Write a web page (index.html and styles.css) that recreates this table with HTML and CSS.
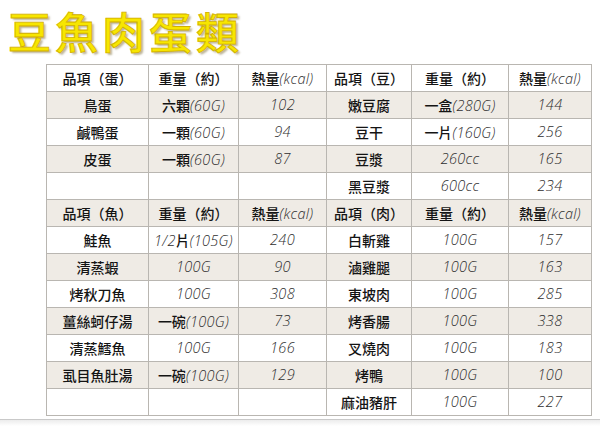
FILE: index.html
```html
<!DOCTYPE html>
<html lang="zh-Hant">
<head>
<meta charset="utf-8">
<title>豆魚肉蛋類</title>
<link rel="stylesheet" href="styles.css">
</head>
<body>
<div class="page">
  <h1 class="title">豆魚肉蛋類</h1>
  <table class="food">
    <colgroup>
      <col class="c1"><col class="c2"><col class="c3"><col class="c4"><col class="c5"><col class="c6">
    </colgroup>
    <tbody>
      <tr><td>品項（蛋）</td><td>重量（約）</td><td>熱量<span class="n">(kcal)</span></td><td>品項（豆）</td><td>重量（約）</td><td>熱量<span class="n">(kcal)</span></td></tr>
      <tr class="alt"><td>鳥蛋</td><td>六顆<span class="n">(60G)</span></td><td class="n">102</td><td>嫩豆腐</td><td>一盒<span class="n">(280G)</span></td><td class="n">144</td></tr>
      <tr><td>鹹鴨蛋</td><td>一顆<span class="n">(60G)</span></td><td class="n">94</td><td>豆干</td><td>一片<span class="n">(160G)</span></td><td class="n">256</td></tr>
      <tr class="alt"><td>皮蛋</td><td>一顆<span class="n">(60G)</span></td><td class="n">87</td><td>豆漿</td><td class="n">260cc</td><td class="n">165</td></tr>
      <tr><td></td><td></td><td></td><td>黑豆漿</td><td class="n">600cc</td><td class="n">234</td></tr>
      <tr class="alt"><td>品項（魚）</td><td>重量（約）</td><td>熱量<span class="n">(kcal)</span></td><td>品項（肉）</td><td>重量（約）</td><td>熱量<span class="n">(kcal)</span></td></tr>
      <tr><td>鮭魚</td><td><span class="n">1/2</span>片<span class="n">(105G)</span></td><td class="n">240</td><td>白斬雞</td><td class="n">100G</td><td class="n">157</td></tr>
      <tr class="alt"><td>清蒸蝦</td><td class="n">100G</td><td class="n">90</td><td>滷雞腿</td><td class="n">100G</td><td class="n">163</td></tr>
      <tr><td>烤秋刀魚</td><td class="n">100G</td><td class="n">308</td><td>東坡肉</td><td class="n">100G</td><td class="n">285</td></tr>
      <tr class="alt"><td>薑絲蚵仔湯</td><td>一碗<span class="n">(100G)</span></td><td class="n">73</td><td>烤香腸</td><td class="n">100G</td><td class="n">338</td></tr>
      <tr><td>清蒸鱈魚</td><td class="n">100G</td><td class="n">166</td><td>叉燒肉</td><td class="n">100G</td><td class="n">183</td></tr>
      <tr class="alt"><td>虱目魚肚湯</td><td>一碗<span class="n">(100G)</span></td><td class="n">129</td><td>烤鴨</td><td class="n">100G</td><td class="n">100</td></tr>
      <tr><td></td><td></td><td></td><td>麻油豬肝</td><td class="n">100G</td><td class="n">227</td></tr>
    </tbody>
  </table>
  <div class="edge"></div>
</div>
</body>
</html>
```
FILE: styles.css
```css
html, body {
  margin: 0;
  padding: 0;
  background: #ffffff;
}
.page {
  width: 600px;
  height: 426px;
  overflow: hidden;
  display: flex;
  flex-direction: column;
}
.title {
  margin: 0;
  padding: 0 0 0 8px;
  height: 60px;
  box-sizing: border-box;
  font-family: "Noto Sans CJK TC", "Noto Sans CJK SC", sans-serif;
  font-weight: 500;
  font-size: 43px;
  line-height: 60px;
  letter-spacing: 4px;
  color: #f7e600;
  -webkit-text-stroke: 0.8px #d2b000;
  text-shadow: 2px 2px 2px rgba(90, 70, 0, 0.4);
}
.food {
  margin: 4px 0 0 46px;
  border-collapse: collapse;
  table-layout: fixed;
  width: 545px;
  font-family: "Noto Sans CJK TC", "Noto Sans CJK SC", sans-serif;
  font-size: 14px;
  font-weight: 500;
  color: #141414;
}
.c1 { width: 102px; }
.c2 { width: 90px; }
.c3 { width: 88px; }
.c4 { width: 85px; }
.c5 { width: 97px; }
.c6 { width: 83px; }
.food td {
  height: 26px;
  padding: 0;
  border: 1px solid #b9b6b1;
  text-align: center;
  vertical-align: middle;
  line-height: 20px;
  white-space: nowrap;
  overflow: hidden;
}
.food tr.alt td {
  background: #efebe5;
}
.n {
  font-family: "Open Sans", "DejaVu Sans", sans-serif;
  font-style: italic;
  font-weight: 300;
  color: #2e2e2e;
  font-size: 14.5px;
  letter-spacing: 0.3px;
}
.edge {
  margin-top: 3px;
  height: 6px;
  border-top: 1px solid #c9c9c9;
  background: linear-gradient(#ececec, #ffffff);
}
```
